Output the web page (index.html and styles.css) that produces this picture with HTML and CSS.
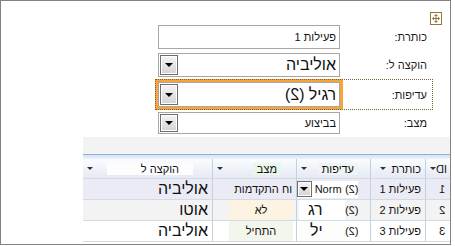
FILE: index.html
```html
<!DOCTYPE html>
<html lang="he" dir="rtl">
<head>
    <meta charset="UTF-8">
    <meta name="viewport" content="width=device-width, initial-scale=1.0">
    <title>פעילות</title>
    <link rel="stylesheet" href="styles.css">
</head>
<body>
    <div class="frame">
        <!-- טופס ראשי -->
        <div class="form">
            <div class="handle-row">
                <svg class="move-handle" width="12" height="13" viewBox="0 0 12 13">
                    <rect x="0.5" y="0.5" width="11" height="12" fill="#fff" stroke="#94773f"/>
                    <path d="M6 3v7M3 6.5h6" stroke="#94773f" stroke-width="1"/>
                    <path d="M6 2l-2 2h4zM6 11l-2-2h4zM2 6.5l2-2v4zM10 6.5l-2-2v4z" fill="#94773f"/>
                </svg>
            </div>
            <div class="field">
                <label>כותרת:</label>
                <div class="box small">פעילות 1</div>
            </div>
            <div class="field gap4">
                <label>הוקצה ל:</label>
                <div class="box big combo">
                    <span>אוליביה</span>
                    <span class="drop"><i></i></span>
                </div>
            </div>
            <div class="field gap5 focus">
                <label>עדיפות:</label>
                <div class="box big combo tall">
                    <span class="val">
                        <span>רגיל</span>
                        <span class="flip" dir="ltr">(2)</span>
                    </span>
                    <span class="drop"><i></i></span>
                </div>
            </div>
            <div class="field gap5">
                <label>מצב:</label>
                <div class="box small combo short">
                    <span>בביצוע</span>
                    <span class="drop"><i></i></span>
                </div>
            </div>
        </div>

        <!-- גליון נתונים -->
        <div class="sheet">
            <div class="sheet-top"></div>
            <div class="sheet-rule"></div>
            <div class="row head">
                <div class="c c-id"><span class="flip" dir="ltr">ID</span><i class="arrow"></i></div>
                <div class="c c-title"><span>כותרת</span><i class="arrow near"></i></div>
                <div class="c c-prio"><span class="tint">עדיפות</span><i class="arrow"></i></div>
                <div class="c c-state"><span class="tint green">מצב</span><i class="arrow"></i></div>
                <div class="c c-who"><span class="tint white">הוקצה ל</span><i class="arrow"></i></div>
            </div>
            <div class="row sel">
                <div class="c c-id"><span class="flip" dir="ltr">1</span></div>
                <div class="c c-title">פעילות 1</div>
                <div class="c c-prio">
                    <div class="mini-combo">
                        <span class="flip" dir="ltr">(2)</span>
                        <span class="clip" dir="ltr">Norm</span>
                        <span class="drop mini"><i></i></span>
                    </div>
                </div>
                <div class="c c-state">וח התקדמות</div>
                <div class="c c-who big">אוליביה</div>
            </div>
            <div class="row alt">
                <div class="c c-id"><span class="flip" dir="ltr">2</span></div>
                <div class="c c-title">פעילות 2</div>
                <div class="c c-prio"><span class="flip" dir="ltr">(2)</span><span class="piece big">רג</span></div>
                <div class="c c-state"><span class="pad peach">לא</span></div>
                <div class="c c-who big">אוטו</div>
            </div>
            <div class="row">
                <div class="c c-id"><span class="flip" dir="ltr">3</span></div>
                <div class="c c-title">פעילות 3</div>
                <div class="c c-prio"><span class="flip" dir="ltr">(2)</span><span class="piece big">יל</span></div>
                <div class="c c-state"><span class="pad mint">התחיל</span></div>
                <div class="c c-who big">אוליביה</div>
            </div>
        </div>
    </div>
</body>
</html>
```

FILE: styles.css
```css
body {
    margin: 0;
    font-family: "Liberation Sans", Arial, sans-serif;
    background: #fff;
    color: #111;
}
.frame {
    width: 451px;
    height: 245px;
    margin-left: 0;
    margin-right: auto; /* בכיוון ימין-לשמאל המסגרת נצמדת לשמאל */
    box-sizing: border-box;
    border: 1px solid #828282;
    background: #fff;
}

/* טופס */
.form {
    height: 136px;
}
.handle-row {
    display: flex;
    height: 13px;
    padding-top: 11px;
    padding-right: 8px;
}
.field {
    position: relative;
    display: flex;
    align-items: center;
    width: 272px;
    margin-right: 20px;
}
.gap4 { margin-top: 4px; }
.gap5 { margin-top: 5px; }
.field label {
    width: 90px;
    box-sizing: border-box;
    padding-right: 3px;
    font-size: 11px;
    color: #1a1a1a;
}
.box {
    width: 182px;
    height: 24px;
    box-sizing: border-box;
    border: 1px solid #a7a7a7;
    display: flex;
    align-items: center;
    justify-content: space-between;
    padding-right: 3px;
    background: #fff;
}
.box.tall { height: 25px; }
.box.short { height: 22px; }
.small { font-size: 11px; }
.big { font-size: 16px; }
.val {
    display: flex;
    align-items: center;
    gap: 4px;
}
.focus .box {
    outline: 3px solid #f7a43c;
}
.focus::after {
    content: "";
    position: absolute;
    top: -3px;
    bottom: -3px;
    left: -3px;
    right: -3px;
    border: 1px dotted #7d6136;
    pointer-events: none;
}
.drop {
    align-self: stretch;
    width: 18px;
    margin: 1px;
    box-sizing: border-box;
    border: 1px solid #6e6e6e;
    box-shadow: inset 0 0 0 1px #fff;
    background: linear-gradient(#f5f5f5, #d3d3d3);
    display: flex;
    align-items: center;
    justify-content: center;
}
.drop i {
    width: 0;
    height: 0;
    border-left: 4px solid transparent;
    border-right: 4px solid transparent;
    border-top: 4px solid #000;
}
.flip {
    display: inline-block;
    transform: scaleX(-1);
}

/* גליון נתונים */
.sheet {
    margin-left: 82px;
    font-size: 11px;
}
.sheet-top {
    height: 17px;
    background: #f3f3f3;
}
.sheet-rule {
    height: 4px;
    border-top: 1px solid #8fb0da;
    background: linear-gradient(#d6e3f3, #edf2f9);
}
.row {
    display: flex;
    height: 21px;
}
.row.head {
    height: 20px;
    background: linear-gradient(#fbfcfe, #e3e9f2);
}
.row.sel { background: #ebebf5; }
.row.alt { background: #f3f3f3; }
.c {
    display: flex;
    align-items: center;
    box-sizing: border-box;
    border-left: 1px solid #c4d0e0;
    border-bottom: 1px solid #d2dae6;
    padding-right: 4px;
    white-space: nowrap;
    overflow: hidden;
}
.c-id { width: 25px; padding-right: 5px; }
.c-title { width: 55px; }
.c-prio { width: 74px; padding-right: 12px; }
.c-state { width: 84px; }
.c-who { flex: 1; border-left: none; }
.head .c-id { padding-right: 3px; }
.head .c-title { padding-right: 4px; }
.head .c-prio { padding-right: 12px; }
.head .c-state { padding-right: 15px; }
.head .c-who { padding-right: 19px; }
.arrow {
    margin-right: auto;
    margin-left: 4px;
    width: 0;
    height: 0;
    border-left: 3px solid transparent;
    border-right: 3px solid transparent;
    border-top: 3px solid #333;
}
.arrow.near {
    margin-right: 6px;
}
.tint { background: #eef5f4; padding: 0 4px; }
.tint.green { background: #eaf6ea; }
.tint.white { background: #fdfdfe; padding: 0 14px 0 34px; }

.mini-combo {
    display: flex;
    align-items: center;
    gap: 3px;
    background: #fff;
    height: 17px;
}
.clip { font-size: 11px; }
.drop.mini {
    width: 15px;
    height: 16px;
    margin: 0;
    align-self: center;
}
.piece {
    width: 46px;
    box-sizing: border-box;
    background: #fff;
    padding-right: 22px;
    height: 20px;
    display: flex;
    align-items: center;
    overflow: hidden;
}
.row:last-child .piece { background: #fdfefb; }
.pad {
    width: 64px;
    text-align: center;
    margin-right: -1px;
    height: 20px;
    line-height: 20px;
}
.peach { background: #fdf3e2; }
.mint { background: #f3f6ec; }
```
